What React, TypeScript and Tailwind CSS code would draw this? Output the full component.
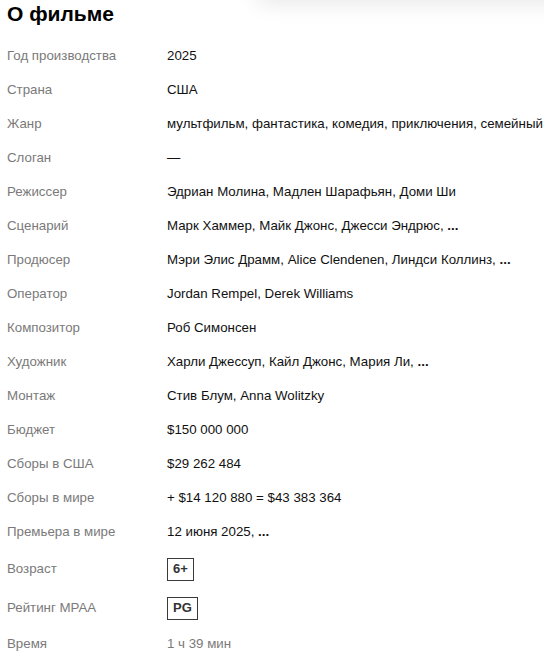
import React from 'react';

type Row = { label: string; value: React.ReactNode; h?: string };

const More = () => <span className="font-bold">...</span>;

const Badge = ({ children }: { children: React.ReactNode }) => (
    <span className="inline-flex h-[23px] items-center border border-[#3a3a3a] px-[5px] text-[13px] font-bold text-[#333]">
        {children}
    </span>
);

const rows: Row[] = [
    { label: 'Год производства', value: '2025' },
    { label: 'Страна', value: 'США' },
    { label: 'Жанр', value: 'мультфильм, фантастика, комедия, приключения, семейный' },
    { label: 'Слоган', value: '—' },
    { label: 'Режиссер', value: 'Эдриан Молина, Мадлен Шарафьян, Доми Ши' },
    { label: 'Сценарий', value: <>Марк Хаммер, Майк Джонс, Джесси Эндрюс, <More /></> },
    { label: 'Продюсер', value: <>Мэри Элис Драмм, Alice Clendenen, Линдси Коллинз, <More /></> },
    { label: 'Оператор', value: 'Jordan Rempel, Derek Williams' },
    { label: 'Композитор', value: 'Роб Симонсен' },
    { label: 'Художник', value: <>Харли Джессуп, Кайл Джонс, Мария Ли, <More /></> },
    { label: 'Монтаж', value: 'Стив Блум, Anna Wolitzky' },
    { label: 'Бюджет', value: '$150 000 000' },
    { label: 'Сборы в США', value: '$29 262 484' },
    { label: 'Сборы в мире', value: '+ $14 120 880 = $43 383 364' },
    { label: 'Премьера в мире', value: <>12 июня 2025, <More /></> },
    { label: 'Возраст', value: <Badge>6+</Badge>, h: 'h-[40px]' },
    { label: 'Рейтинг MPAA', value: <Badge>PG</Badge>, h: 'h-[38px]' },
    { label: 'Время', value: <span className="text-[#7a7a7a]">1 ч 39 мин</span> },
];

export default function App() {
    return (
        <div className="relative min-h-[659px] overflow-hidden bg-white pl-[7px] font-['Liberation_Sans',Arial,sans-serif] text-black">
            {/* тень сверху справа */}
            <div className="pointer-events-none absolute -top-[30px] right-[-40px] h-[30px] w-[330px] rounded-full shadow-[0_4px_22px_rgba(0,0,0,0.09)]" />

            <h2 className="mb-[11px] h-[28px] text-[21px] leading-[28px] font-bold">О фильме</h2>

            <div>
                {rows.map(r => (
                    <div key={r.label} className={`flex items-center ${r.h ?? 'h-[34px]'}`}>
                        <div className="w-[160px] shrink-0 text-[13.3px] text-[#7a7a7a]">{r.label}</div>
                        <div className="whitespace-nowrap text-[13.3px] text-[#111]">{r.value}</div>
                    </div>
                ))}
            </div>
        </div>
    );
}
